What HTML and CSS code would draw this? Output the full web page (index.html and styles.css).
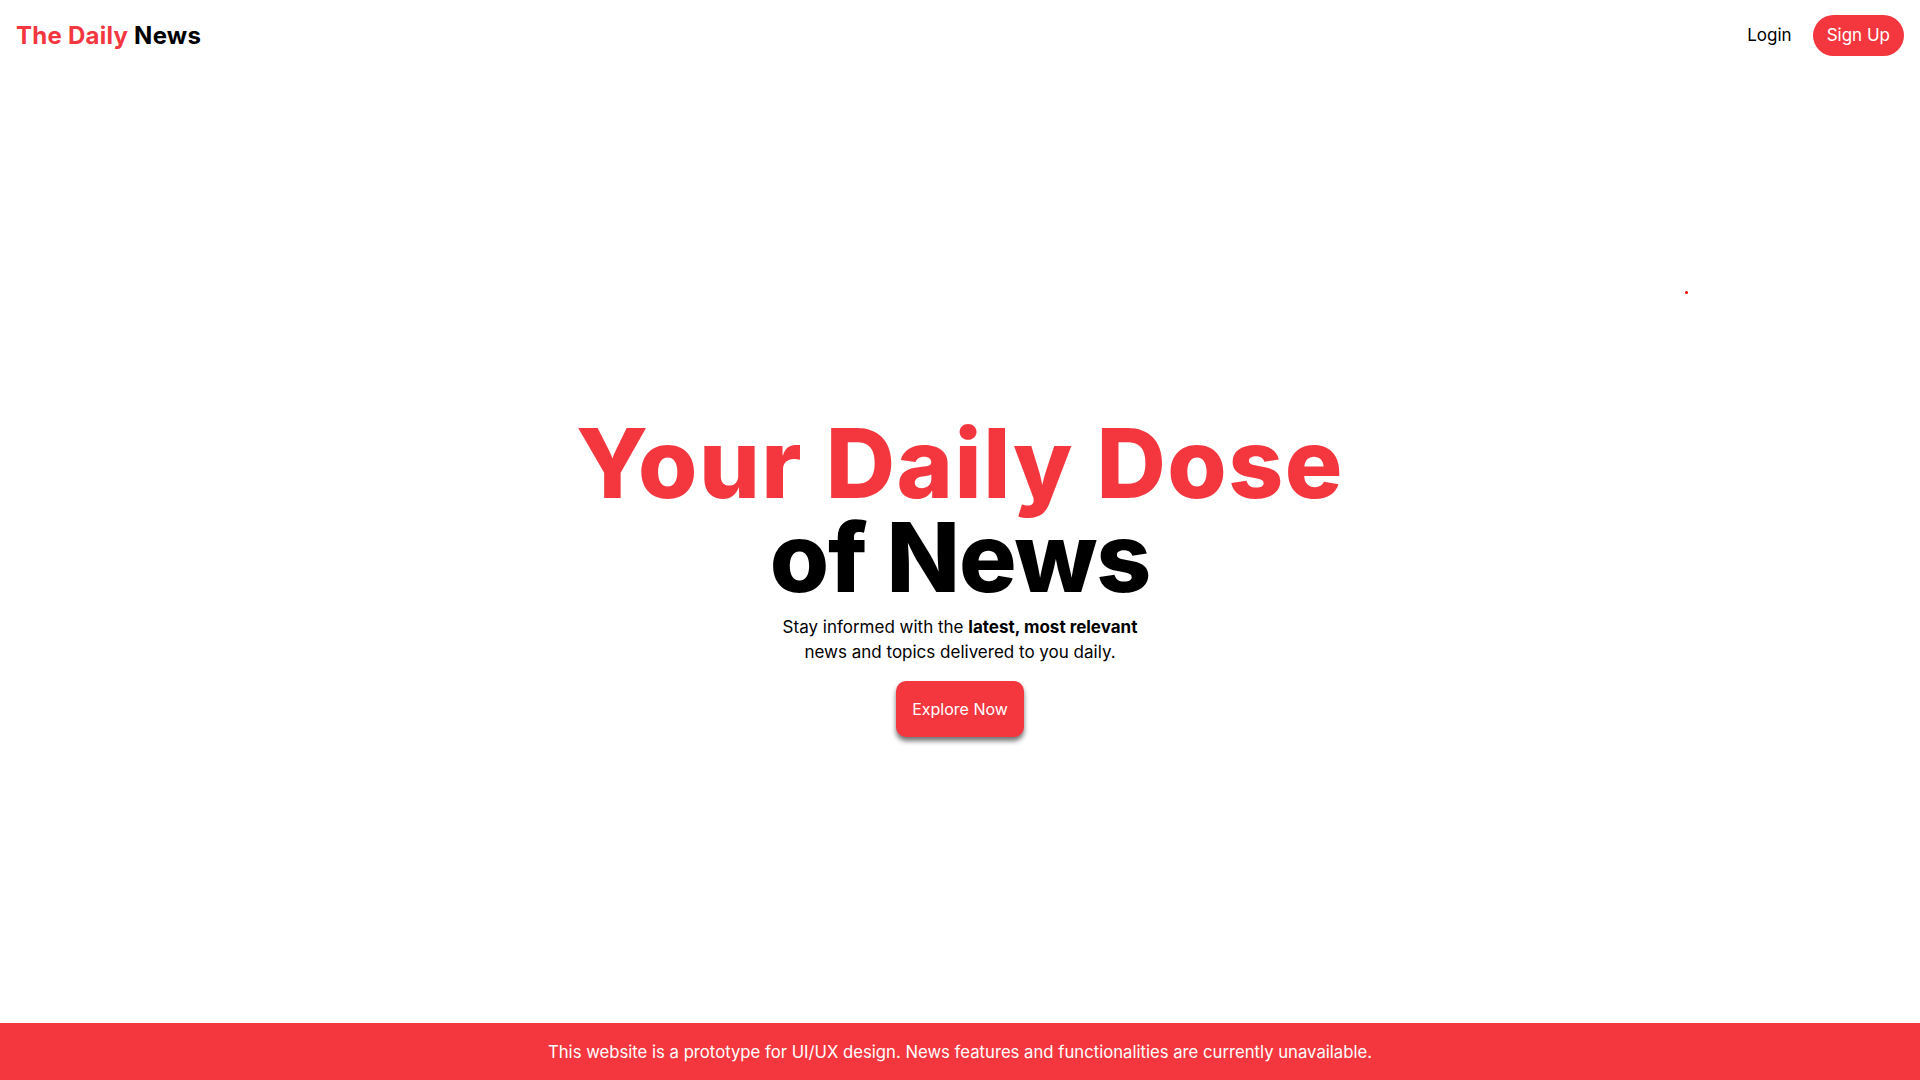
FILE: index.html
```html
<!DOCTYPE html>
<html lang="en">
<head>
<meta charset="utf-8">
<title>The Daily News</title>
<link rel="stylesheet" href="styles.css">
</head>
<body>
<div class="page">
  <header class="topbar">
    <a class="logo" href="#"><span class="logo-red">The Daily</span> <span class="logo-dark">News</span></a>
    <nav class="nav">
      <a class="nav-login" href="#">Login</a>
      <a class="nav-signup" href="#">Sign Up</a>
    </nav>
  </header>
  <main class="hero">
    <span class="dot"></span>
    <h1 class="hero-title"><span class="title-red">Your Daily Dose</span><span class="title-dark">of News</span></h1>
    <p class="hero-text">Stay informed with the <strong>latest, most relevant</strong><br>news and topics delivered to you daily.</p>
    <a class="hero-btn" href="#">Explore Now</a>
  </main>
  <footer class="notice">This website is a prototype for UI/UX design. News features and functionalities are currently unavailable.</footer>
</div>
</body>
</html>
```
FILE: styles.css
```css
* { box-sizing: border-box; }
html, body { margin: 0; padding: 0; }
body {
  font-family: Inter, "Open Sans", "Liberation Sans", sans-serif;
  color: #000;
  background: #fff;
}
a { text-decoration: none; }
.page {
  height: 100vh;
  display: flex;
  flex-direction: column;
}
.topbar {
  height: 70px;
  padding: 0 16px;
  display: flex;
  align-items: center;
  justify-content: space-between;
}
.logo {
  font-size: 24px;
  font-weight: 700;
  letter-spacing: 0.25px;
}
.logo-red { color: #f4373f; }
.logo-dark { color: #000; }
.nav {
  display: flex;
  align-items: center;
  gap: 21px;
}
.nav-login {
  color: #000;
  font-size: 17px;
}
.nav-signup {
  background: #f4373f;
  color: #fff;
  font-size: 17px;
  height: 41px;
  padding: 0 14px;
  border-radius: 21px;
  display: flex;
  align-items: center;
}
.hero {
  position: relative;
  flex: 1;
  display: flex;
  flex-direction: column;
  align-items: center;
  justify-content: center;
  padding-top: 60px;
  text-align: center;
}
.dot {
  position: absolute;
  left: 1685px;
  top: 221px;
  width: 3px;
  height: 3px;
  border-radius: 50%;
  background: #f00;
}
.hero-title {
  margin: 0;
  font-size: 96px;
  font-weight: 800;
  line-height: 94px;
  display: flex;
  flex-direction: column;
  align-items: center;
}
.title-red { color: #f4373f; letter-spacing: 1.5px; }
.title-dark { color: #000; letter-spacing: -1px; }
.hero-text {
  margin: 11px 0 16px;
  font-size: 17px;
  line-height: 25px;
}
.hero-text strong { font-weight: 700; }
.hero-btn {
  background: #f4373f;
  color: #fff;
  font-size: 16px;
  line-height: 24px;
  padding: 16px 16px;
  border-radius: 10px;
  box-shadow: 0 4px 5px rgba(0,0,0,0.55);
}
.notice {
  height: 57px;
  background: #f4373f;
  color: #fff;
  font-size: 16.7px;
  display: flex;
  align-items: center;
  justify-content: center;
}
```
